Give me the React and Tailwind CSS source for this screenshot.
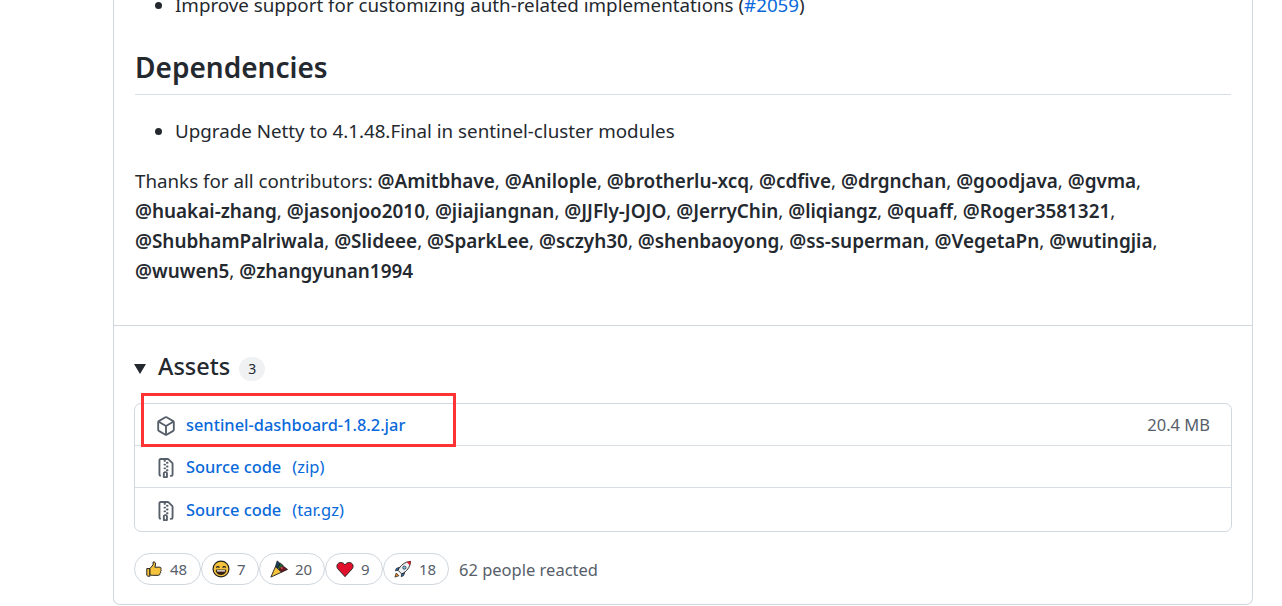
import React from "react";

const Contributor = ({ name, last }) => (
  <>
    <span className="font-semibold text-[18.9px]">@{name}</span>
    {last ? "" : ", "}
  </>
);

const contributorLines = [
  ["Amitbhave", "Anilople", "brotherlu-xcq", "cdfive", "drgnchan", "goodjava", "gvma"],
  ["huakai-zhang", "jasonjoo2010", "jiajiangnan", "JJFly-JOJO", "JerryChin", "liqiangz", "quaff", "Roger3581321"],
  ["ShubhamPalriwala", "Slideee", "SparkLee", "sczyh30", "shenbaoyong", "ss-superman", "VegetaPn", "wutingjia"],
  ["wuwen5", "zhangyunan1994"],
];

const PackageIcon = () => (
  <svg viewBox="0 0 16 16" className="w-5 h-5" fill="currentColor">
    <path d="m8.878.392 5.25 3.045c.54.314.872.89.872 1.514v6.098a1.75 1.75 0 0 1-.872 1.514l-5.25 3.045a1.75 1.75 0 0 1-1.756 0l-5.25-3.045A1.75 1.75 0 0 1 1 11.049V4.951c0-.624.332-1.201.872-1.514L7.122.392a1.75 1.75 0 0 1 1.756 0ZM7.875 1.69l-4.63 2.685L8 7.133l4.755-2.758-4.63-2.685a.248.248 0 0 0-.25 0ZM2.5 5.677v5.372c0 .09.047.171.125.216l4.625 2.683V8.432Zm6.25 8.271 4.625-2.683a.25.25 0 0 0 .125-.216V5.677L8.75 8.432Z" />
  </svg>
);

const ZipIcon = () => (
  <svg viewBox="0 0 16 16" className="w-5 h-5" fill="currentColor">
    <path d="M3.5 1.75v11.5c0 .09.048.173.126.217a.75.75 0 0 1-.752 1.298A1.748 1.748 0 0 1 2 13.25V1.75C2 .784 2.784 0 3.75 0h5.586c.464 0 .909.185 1.237.513l2.914 2.914c.329.328.513.773.513 1.237v8.586A1.75 1.75 0 0 1 12.25 15h-.5a.75.75 0 0 1 0-1.5h.5a.25.25 0 0 0 .25-.25V4.664a.25.25 0 0 0-.073-.177L9.513 1.573a.25.25 0 0 0-.177-.073H7.25a.75.75 0 0 1 0 1.5h-.5a.75.75 0 0 1 0-1.5h-3a.25.25 0 0 0-.25.25Zm3.75 8.75h.5c.966 0 1.75.784 1.75 1.75v3a.75.75 0 0 1-.75.75h-2.5a.75.75 0 0 1-.75-.75v-3c0-.966.784-1.75 1.75-1.75ZM6 5.25a.75.75 0 0 1 .75-.75h.5a.75.75 0 0 1 0 1.5h-.5A.75.75 0 0 1 6 5.25Zm.75 2.25h.5a.75.75 0 0 1 0 1.5h-.5a.75.75 0 0 1 0-1.5ZM8 6.75A.75.75 0 0 1 8.75 6h.5a.75.75 0 0 1 0 1.5h-.5A.75.75 0 0 1 8 6.75ZM8.75 3h.5a.75.75 0 0 1 0 1.5h-.5a.75.75 0 0 1 0-1.5ZM8 9.75A.75.75 0 0 1 8.75 9h.5a.75.75 0 0 1 0 1.5h-.5A.75.75 0 0 1 8 9.75Zm-1 2.5v2.25h1v-2.25a.25.25 0 0 0-.25-.25h-.5a.25.25 0 0 0-.25.25Z" />
  </svg>
);

const Thumb = () => (
  <svg viewBox="0 0 20 20" className="w-[18px] h-[18px]">
    <path d="M2 9.5h3.5V18H3.2L2 17z" fill="#f5c33b" stroke="#1f1f1f" strokeWidth="1.1" />
    <path d="M5.5 9.5l3.5-4V2.2c1.8-.4 2.8.8 2.8 2.3L11 8h5.5c1.4 0 1.7 1.5 1 2.2.7.7.6 1.9-.2 2.4.4.9.1 1.8-.7 2.2.2 1.3-.5 2.2-1.6 2.2H8c-1 0-1.7-.4-2.5-.6z" fill="#f5c33b" stroke="#1f1f1f" strokeWidth="1.1" strokeLinejoin="round" />
  </svg>
);

const Smile = () => (
  <svg viewBox="0 0 20 20" className="w-[18px] h-[18px]">
    <circle cx="10" cy="10" r="8.8" fill="#f5c33b" stroke="#1f1f1f" strokeWidth="1.3" />
    <path d="M4.8 8.5c.8-1.5 2.6-1.5 3.4 0M11.8 8.5c.8-1.5 2.6-1.5 3.4 0" fill="none" stroke="#1f1f1f" strokeWidth="1.3" />
    <path d="M4.5 11h11c0 3.2-2.5 5.2-5.5 5.2S4.5 14.2 4.5 11z" fill="#3a1d12" stroke="#1f1f1f" strokeWidth=".8" />
    <path d="M5.5 11.3h9v1.5h-9z" fill="#fff" />
  </svg>
);

const Tada = () => (
  <svg viewBox="0 0 20 20" className="w-[18px] h-[18px]">
    <path d="M1 19L6 7.5l7 6z" fill="#f5c33b" stroke="#1f1f1f" strokeWidth="1" strokeLinejoin="round" />
    <path d="M6 7.5L8 1l3 2.5L9.5 9z" fill="#173f63" stroke="#111" strokeWidth=".8" />
    <path d="M8.5 8l3-4.5 3 2.5-3 5z" fill="#245c34" stroke="#111" strokeWidth=".8" />
    <path d="M10 10.5L15 7l4.5 3.5-6.5 3z" fill="#6d1824" stroke="#111" strokeWidth=".8" />
    <circle cx="13" cy="9" r="1.2" fill="#e8493f" />
  </svg>
);

const Heart = () => (
  <svg viewBox="0 0 20 20" className="w-[18px] h-[18px]">
    <path d="M10 18.5L2 9.8C-.1 7.3 1.2 2.8 5.3 2.8c2.1 0 3.7 1 4.7 2.7 1-1.7 2.6-2.7 4.7-2.7 4.1 0 5.4 4.5 3.3 7z" fill="#e3102c" stroke="#1f1f1f" strokeWidth="1" strokeLinejoin="round" />
  </svg>
);

const Rocket = () => (
  <svg viewBox="0 0 20 20" className="w-[18px] h-[18px]">
    <path d="M2.5 14.5L1 19l4.5-1.5z" fill="#f08a24" stroke="#1f1f1f" strokeWidth=".8" />
    <path d="M6 8L2.5 9.5l-1 2.5L5 11.5zM12 14l-1.5 3.5-2.5 1 .5-3.5z" fill="#2f6fb5" stroke="#1f1f1f" strokeWidth=".8" />
    <path d="M4.5 11.5C7 6 12 2 18.5 1.5 18 8 14 13 8.5 15.5z" fill="#eef1f4" stroke="#1f1f1f" strokeWidth="1" strokeLinejoin="round" />
    <path d="M14 2.2c1.5-.5 3-.7 4.5-.7-.1 1.5-.3 3-.8 4.5z" fill="#d8232f" />
    <circle cx="11.5" cy="8.5" r="1.8" fill="#7cc4ee" stroke="#1f1f1f" strokeWidth=".8" />
  </svg>
);

const reactions = [
  { icon: <Thumb />, count: 48, w: "w-[67px]" },
  { icon: <Smile />, count: 7, w: "w-[58px]" },
  { icon: <Tada />, count: 20, w: "w-[66px]" },
  { icon: <Heart />, count: 9, w: "w-[58px]" },
  { icon: <Rocket />, count: 18, w: "w-[66px]" },
];

const AssetRow = ({ icon, name, suffix, size, className }) => (
  <div className={`flex items-center pl-[21px] pr-[21px] pt-[2px] ${className}`}>
    <span className="w-[20px] h-[20px] text-[#57606a] mr-[10px] flex items-center">{icon}</span>
    <span className="text-[#0969da] text-[16.4px] font-medium">{name}</span>
    {suffix && <span className="text-[#0969da] text-[16.5px] ml-[11px]">{suffix}</span>}
    {size && <span className="ml-auto text-[#57606a] text-[16.5px]">{size}</span>}
  </div>
);

export default function App() {
  return (
    <div className="relative h-[606px] w-[1282px] overflow-hidden bg-white font-['Noto_Sans','Open_Sans',sans-serif] text-[#24292f]">
      <div className="ml-[113px] w-[1140px] h-[605px] border-x border-b border-[#d0d7de] rounded-b-[7px] overflow-hidden">
        <div className="px-[21px] h-[336px] border-b border-[#d0d7de]">
          <ul className="list-disc pl-[40px] text-[18.75px] leading-[30px] -mt-[10px]">
            <li>
              Improve support for customizing auth-related implementations (<span className="text-[#0969da]">#2059</span>)
            </li>
          </ul>
          <h2 className="mt-[29px] pb-[8px] border-b border-[#d8dee4] text-[28px] leading-[37px] font-semibold">Dependencies</h2>
          <ul className="list-disc pl-[40px] mt-[21px] text-[18.75px] leading-[30px]">
            <li>Upgrade Netty to 4.1.48.Final in sentinel-cluster modules</li>
          </ul>
          <div className="mt-[20px] text-[18.75px] leading-[30px] whitespace-nowrap">
            {contributorLines.map((line, i) => (
              <p key={i}>
                {i === 0 && "Thanks for all contributors: "}
                {line.map((name, j) => (
                  <Contributor
                    key={name}
                    name={name}
                    last={i === contributorLines.length - 1 && j === line.length - 1}
                  />
                ))}
              </p>
            ))}
          </div>
        </div>

        <div className="px-[20px]">
          <div className="flex items-center mt-[24px] h-[34px]">
            <span className="w-0 h-0 border-x-[6px] border-x-transparent border-t-[10px] border-t-[#24292f] mr-[12px] mt-[3px]"></span>
            <span className="text-[23.5px] font-medium">Assets</span>
            <span className="ml-[9px] mt-[3px] w-[26px] h-[24px] rounded-full bg-[#eff1f3] text-[14px] flex items-center justify-center">3</span>
          </div>

          <div className="mt-[19px] border border-[#d0d7de] rounded-[7px] h-[129px]">
            <AssetRow className="h-[41px]" icon={<PackageIcon />} name="sentinel-dashboard-1.8.2.jar" size="20.4 MB" />
            <AssetRow className="h-[42px] border-t border-[#d8dee4]" icon={<ZipIcon />} name="Source code" suffix="(zip)" />
            <AssetRow className="h-[44px] border-t border-[#d8dee4]" icon={<ZipIcon />} name="Source code" suffix="(tar.gz)" />
          </div>

          <div className="flex items-center mt-[21px]">
            {reactions.map((r) => (
              <div key={r.count} className={`${r.w} h-[32px] border border-[#d0d7de] rounded-full flex items-center pl-[10px] gap-[7px] text-[#57606a] text-[15px]`}>
                {r.icon}
                <span>{r.count}</span>
              </div>
            ))}
            <span className="ml-[10px] mt-[2px] text-[#57606a] text-[16.5px]">62 people reacted</span>
          </div>
        </div>
      </div>

      {/* red highlight drawn over the first asset */}
      <div className="absolute left-[141px] top-[393px] w-[315px] h-[54px] border-[3px] border-[#f33]"></div>
    </div>
  );
}
